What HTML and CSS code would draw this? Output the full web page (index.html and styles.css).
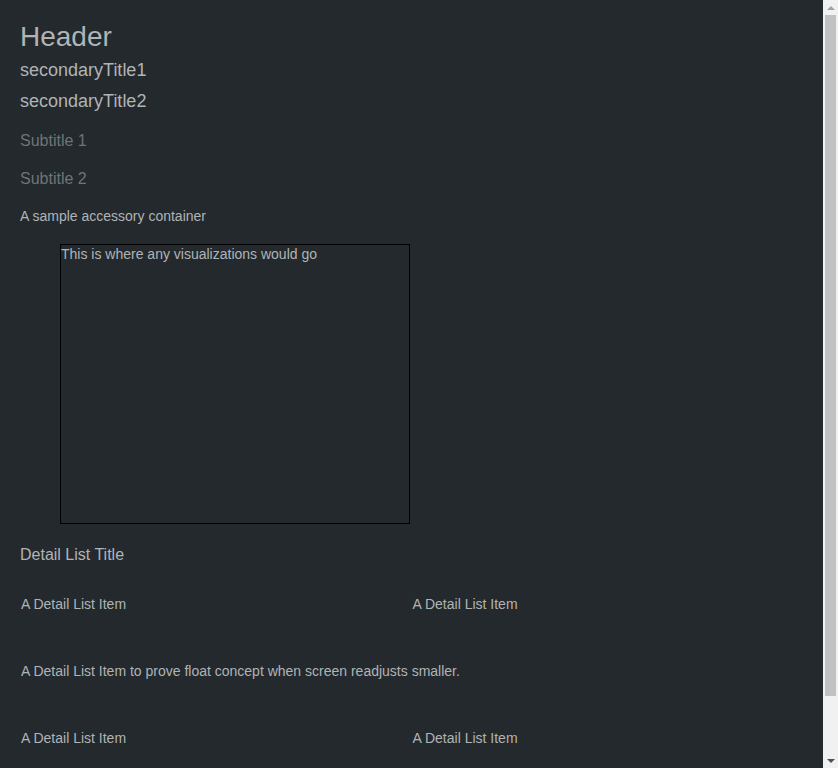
FILE: index.html
```html
<!DOCTYPE html>
<html>
<head>
<meta charset="utf-8">
<link rel="stylesheet" href="styles.css">
</head>
<body>
<div class="page">
  <h1 class="header">Header</h1>
  <h2 class="secondary first">secondaryTitle1</h2>
  <h2 class="secondary second">secondaryTitle2</h2>
  <h3 class="subtitle first-sub">Subtitle 1</h3>
  <h3 class="subtitle">Subtitle 2</h3>
  <p class="accessory">A sample accessory container</p>
  <div class="viz">This is where any visualizations would go</div>
  <h4 class="detail-title">Detail List Title</h4>
  <div class="detail-list">
    <div class="item">A Detail List Item</div>
    <div class="item">A Detail List Item</div>
    <div class="item full">A Detail List Item to prove float concept when screen readjusts smaller.</div>
    <div class="item">A Detail List Item</div>
    <div class="item">A Detail List Item</div>
  </div>
</div>
<div class="scrollbar" aria-hidden="true">
  <div class="sb-button"><span class="arrow-up"></span></div>
  <div class="sb-track"><div class="sb-thumb"></div></div>
  <div class="sb-button"><span class="arrow-down"></span></div>
</div>
</body>
</html>
```
FILE: styles.css
```css
html, body {
  margin: 0;
  padding: 0;
  background: #23292d;
}
body {
  font-family: "Liberation Sans", Arial, sans-serif;
  color: #b0b4b6;
}
.page {
  width: 823px;
  box-sizing: border-box;
  padding: 21px 20px 60px 20px;
}
.header {
  margin: 0;
  font-size: 28px;
  font-weight: normal;
  line-height: 32px;
}
.secondary {
  margin: 0;
  font-size: 18px;
  font-weight: normal;
  line-height: 21px;
}
.secondary.first {
  margin-top: 7px;
}
.secondary.second {
  margin-top: 10px;
}
.subtitle {
  margin: 0;
  font-size: 16px;
  font-weight: normal;
  line-height: 18px;
  color: #6e7478;
}
.subtitle.first-sub {
  margin-top: 20px;
}
.subtitle + .subtitle {
  margin-top: 20px;
}
.accessory {
  margin: 20px 0 0 0;
  font-size: 14px;
  line-height: 16px;
}
.viz {
  margin: 20px 0 0 40px;
  width: 348px;
  height: 277px;
  padding-top: 1px;
  border: 1px solid #000;
  font-size: 14px;
  line-height: 16px;
}
.detail-title {
  margin: 22px 0 0 0;
  font-size: 16px;
  font-weight: normal;
  line-height: 18px;
}
.detail-list {
  margin-top: 7px;
  display: grid;
  grid-template-columns: 1fr 1fr;
}
.item {
  padding: 25px 1px;
  font-size: 14px;
  line-height: 17px;
}
.item.full {
  grid-column: 1 / -1;
}

/* drawn browser scrollbar */
.scrollbar {
  position: fixed;
  top: 0;
  right: 0;
  width: 15px;
  height: 100vh;
  background: #f1f1f1;
  display: flex;
  flex-direction: column;
}
.sb-button {
  height: 15px;
  flex: 0 0 15px;
  display: flex;
  align-items: center;
  justify-content: center;
}
.arrow-up {
  width: 0;
  height: 0;
  border-left: 4px solid transparent;
  border-right: 4px solid transparent;
  border-bottom: 4px solid #a3a3a3;
}
.arrow-down {
  width: 0;
  height: 0;
  border-left: 4px solid transparent;
  border-right: 4px solid transparent;
  border-top: 4px solid #505050;
}
.sb-track {
  flex: 1;
  padding: 0 2px;
}
.sb-thumb {
  height: 681px;
  background: #c1c1c1;
}
```
